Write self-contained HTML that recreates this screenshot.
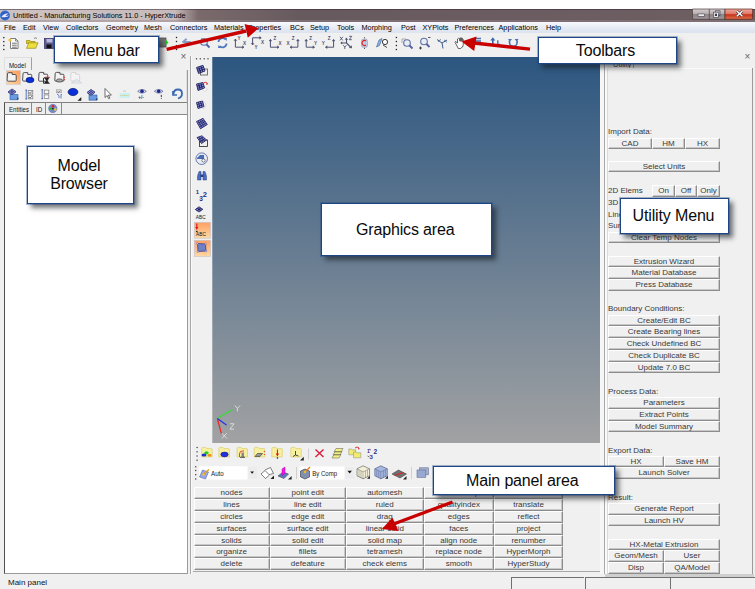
<!DOCTYPE html><html><head><meta charset="utf-8"><style>
*{margin:0;padding:0;box-sizing:border-box}
html,body{width:755px;height:589px;overflow:hidden;background:#f0f0f0;font-family:"Liberation Sans",sans-serif;color:#000}
.a{position:absolute}
.call{position:absolute;background:#fff;border:1px solid #1e4585;box-shadow:0 0 0 1px rgba(30,69,133,.35),4px 4px 5px rgba(20,25,30,.6);font-size:16px;color:#0a0a0a;text-align:center;white-space:nowrap;letter-spacing:-0.15px}
.btn{position:absolute;background:#f0f0f0;border-top:1px solid #fff;border-left:1px solid #fff;border-right:1px solid #8c8c8c;border-bottom:1px solid #8c8c8c;box-shadow:inset -1px -1px 0 #c8c8c8;font-size:8px;text-align:center;white-space:nowrap;color:#383838;line-height:10px}
.lbl{position:absolute;font-size:8px;white-space:nowrap;color:#383838;line-height:10px}
.m{position:absolute;top:2px;font-size:7.3px;white-space:nowrap;color:#000;line-height:9px}
.ic{position:absolute}
</style></head><body>
<div class="a" style="left:0;top:0;width:755px;height:9px;background:#fff"></div>
<div class="a" style="left:0;top:9px;width:755px;height:13px;background:linear-gradient(90deg,#cdc2c1 0px,#c6baba 175px,#7a6a6c 198px,#675a5e 300px,#6a5c60 500px,#6c5e61 690px)"></div>
<div class="a" style="left:0;top:9px;width:755px;height:1px;background:rgba(60,40,55,.55)"></div>
<div class="a" style="left:0;top:20px;width:755px;height:1.5px;background:rgba(150,135,140,.45)"></div>
<div class="a" style="left:13px;top:11px;font-size:7.3px;line-height:9px;color:#000;white-space:nowrap">Untitled - Manufacturing Solutions 11.0 - HyperXtrude</div>
<svg class="a" style="left:0;top:0" width="755" height="25" viewBox="0 0 755 25"><defs><linearGradient id="wb" x1="0" y1="0" x2="0" y2="1"><stop offset="0" stop-color="#d6cece"/><stop offset="0.45" stop-color="#b8aeb0"/><stop offset="0.5" stop-color="#8e8486"/><stop offset="1" stop-color="#a09698"/></linearGradient><linearGradient id="wc" x1="0" y1="0" x2="0" y2="1"><stop offset="0" stop-color="#eca89c"/><stop offset="0.45" stop-color="#e07a68"/><stop offset="0.55" stop-color="#c8341a"/><stop offset="1" stop-color="#e0704c"/></linearGradient></defs><path d="M692.5 9 h32.5 v10.3 h-31 q-1.5 0 -1.5 -1.5 z" fill="url(#wb)" stroke="#4a3e42" stroke-width="0.7"/><path d="M709.3 9 v10.3" stroke="#4a3e42" stroke-width="0.7"/><path d="M725 9 h27.6 v8.8 q0 1.5 -1.5 1.5 h-26.1 z" fill="url(#wc)" stroke="#5a2820" stroke-width="0.7"/><rect x="698" y="14" width="6.4" height="2.2" fill="#fff" stroke="#3a3a4a" stroke-width="0.6"/><rect x="715.5" y="10.8" width="4.5" height="5" fill="none" stroke="#3a3a4a" stroke-width="0.6"/><rect x="713.6" y="12.2" width="4.6" height="5" fill="#fff" stroke="#3a3a4a" stroke-width="0.6"/><rect x="714.8" y="13.6" width="2.2" height="2.4" fill="#3a3a4a"/><path d="M736.8 11 l5.6 5.2 M742.4 11 l-5.6 5.2" stroke="#3a2a2a" stroke-width="2.6"/><path d="M736.8 11 l5.6 5.2 M742.4 11 l-5.6 5.2" stroke="#fff" stroke-width="1.5"/><circle cx="5" cy="15.5" r="5" fill="#2a7ad8"/><circle cx="5" cy="15.5" r="4" fill="#3a5ac0"/><path d="M1.5 17 q2 -4 7 -3.5 q-2 1 -3 2.5 q3 0 4 -1 q-2 3 -8 2 z" fill="#e8ecff"/></svg>
<div class="a" style="left:0;top:22px;width:755px;height:11px;background:linear-gradient(#f7f9fd,#e4e9f3 60%,#dce3ef)"></div>
<span class="m" style="left:4px;top:23px">File</span>
<span class="m" style="left:23px;top:23px">Edit</span>
<span class="m" style="left:43px;top:23px">View</span>
<span class="m" style="left:66px;top:23px">Collectors</span>
<span class="m" style="left:106px;top:23px">Geometry</span>
<span class="m" style="left:144px;top:23px">Mesh</span>
<span class="m" style="left:170px;top:23px">Connectors</span>
<span class="m" style="left:214px;top:23px">Materials</span>
<span class="m" style="left:248px;top:23px">Properties</span>
<span class="m" style="left:290px;top:23px">BCs</span>
<span class="m" style="left:310px;top:23px">Setup</span>
<span class="m" style="left:337px;top:23px">Tools</span>
<span class="m" style="left:361.5px;top:23px">Morphing</span>
<span class="m" style="left:401px;top:23px">Post</span>
<span class="m" style="left:422.5px;top:23px">XYPlots</span>
<span class="m" style="left:454.5px;top:23px">Preferences</span>
<span class="m" style="left:498.5px;top:23px">Applications</span>
<span class="m" style="left:546px;top:23px">Help</span>
<div class="a" style="left:0;top:33px;width:755px;height:24px;background:#f0f0f0"></div>
<div class="a" style="left:190px;top:56px;width:1px;height:518px;background:#a8a8a8"></div>
<div class="a" style="left:191px;top:56px;width:1px;height:518px;background:#fafafa"></div>
<div class="a" style="left:180.5px;top:52px;font-size:10px;color:#666;line-height:10px">&#215;</div>
<div class="a" style="left:4px;top:57px;width:28px;height:13px;border-left:1px solid #e0e0e0;border-top:1px solid #e0e0e0;border-right:1px solid #a0a0a0;background:#f0f0f0"></div>
<div class="lbl" style="left:8.8px;top:60.5px;font-size:7.5px;color:#111;transform:scaleX(0.82);transform-origin:0 0">Model</div>
<div class="a" style="left:186px;top:69.5px;width:1px;height:504px;background:#e0e0e0"></div>
<div class="a" style="left:187px;top:69.5px;width:1px;height:504px;background:#9a9a9a"></div>
<div class="a" style="left:4px;top:102px;width:183px;height:13px;background:#eeeeee;border-top:1px solid #808080;border-bottom:1px solid #8a8a8a;border-left:1px solid #505050"></div>
<div class="lbl" style="left:8.6px;top:105px;font-size:7.8px;color:#111;transform:scaleX(0.78);transform-origin:0 0">Entities</div>
<div class="a" style="left:31px;top:103px;width:1px;height:11px;background:#8a8a8a"></div>
<div class="lbl" style="left:35.5px;top:105px;font-size:7.8px;color:#111;transform:scaleX(0.8);transform-origin:0 0">ID</div>
<div class="a" style="left:44.5px;top:103px;width:1px;height:11px;background:#8a8a8a"></div>
<div class="a" style="left:61px;top:103px;width:1px;height:11px;background:#8a8a8a"></div>
<div class="a" style="left:4px;top:115px;width:183px;height:458.5px;background:#fff;border-left:1px solid #505050;border-bottom:1px solid #9a9a9a"></div>
<div class="a" style="left:212px;top:57px;width:388px;height:386px;background:linear-gradient(#2c5680,#a1a2a3)"></div>
<div class="a" style="left:212px;top:57px;width:1px;height:386px;background:rgba(255,255,255,.25)"></div>
<div class="a" style="left:600px;top:57px;width:4px;height:517px;background:#f6f6f6"></div>
<div class="a" style="left:604px;top:56px;width:1px;height:518px;background:#a8a8a8"></div>
<div class="a" style="left:605px;top:56px;width:2px;height:518px;background:#fafafa"></div>
<div class="a" style="left:744.5px;top:52px;font-size:10px;color:#666;line-height:10px">&#215;</div>
<div class="lbl" style="left:613px;top:60px;font-size:7.5px">Utility</div>
<div class="a" style="left:633px;top:60px;width:1px;height:8px;background:#a0a0a0"></div>
<div class="a" style="left:607px;top:69px;width:1px;height:505px;background:#dadada"></div>
<div class="a" style="left:607px;top:68px;width:145px;height:1px;background:#fafafa"></div>
<div class="a" style="left:752px;top:68px;width:1px;height:506px;background:#9a9a9a"></div>
<div class="a" style="left:605px;top:574px;width:149px;height:3px;background:#cfcfcf"></div>
<div class="a" style="left:600px;top:577px;width:155px;height:1px;background:#6a6a6a"></div>
<div class="lbl" style="left:608px;top:127px">Import Data:</div>
<div class="btn" style="left:608px;top:138px;width:44px;height:11px;line-height:9px">CAD</div>
<div class="btn" style="left:652px;top:138px;width:33px;height:11px;line-height:9px">HM</div>
<div class="btn" style="left:685px;top:138px;width:35px;height:11px;line-height:9px">HX</div>
<div class="btn" style="left:608px;top:161px;width:112px;height:11px;line-height:9px">Select Units</div>
<div class="lbl" style="left:608px;top:186px">2D Elems</div>
<div class="btn" style="left:652px;top:185px;width:23px;height:12px;line-height:10px">On</div>
<div class="btn" style="left:675px;top:185px;width:22px;height:12px;line-height:10px">Off</div>
<div class="btn" style="left:697px;top:185px;width:23px;height:12px;line-height:10px">Only</div>
<div class="lbl" style="left:608px;top:198px">3D Elems</div>
<div class="lbl" style="left:608px;top:210px">Line</div>
<div class="lbl" style="left:608px;top:221px">Surf</div>
<div class="btn" style="left:608px;top:232px;width:112px;height:11px;line-height:9px">Clear Temp Nodes</div>
<div class="btn" style="left:608px;top:256px;width:112px;height:11px;line-height:9px">Extrusion Wizard</div>
<div class="btn" style="left:608px;top:267px;width:112px;height:12px;line-height:10px">Material Database</div>
<div class="btn" style="left:608px;top:279px;width:112px;height:12px;line-height:10px">Press Database</div>
<div class="lbl" style="left:608px;top:304px">Boundary Conditions:</div>
<div class="btn" style="left:608px;top:315px;width:112px;height:11px;line-height:9px">Create/Edit BC</div>
<div class="btn" style="left:608px;top:326px;width:112px;height:12px;line-height:10px">Create Bearing lines</div>
<div class="btn" style="left:608px;top:338px;width:112px;height:12px;line-height:10px">Check Undefined BC</div>
<div class="btn" style="left:608px;top:350px;width:112px;height:12px;line-height:10px">Check Duplicate BC</div>
<div class="btn" style="left:608px;top:362px;width:112px;height:11px;line-height:9px">Update 7.0 BC</div>
<div class="lbl" style="left:608px;top:387px">Process Data:</div>
<div class="btn" style="left:608px;top:397px;width:112px;height:12px;line-height:10px">Parameters</div>
<div class="btn" style="left:608px;top:409px;width:112px;height:12px;line-height:10px">Extract Points</div>
<div class="btn" style="left:608px;top:421px;width:112px;height:11px;line-height:9px">Model Summary</div>
<div class="lbl" style="left:608px;top:446px">Export Data:</div>
<div class="btn" style="left:608px;top:456px;width:56px;height:11px;line-height:9px">HX</div>
<div class="btn" style="left:664px;top:456px;width:56px;height:11px;line-height:9px">Save HM</div>
<div class="btn" style="left:608px;top:467px;width:112px;height:12px;line-height:10px">Launch Solver</div>
<div class="lbl" style="left:608px;top:493px">Result:</div>
<div class="btn" style="left:608px;top:503px;width:112px;height:12px;line-height:10px">Generate Report</div>
<div class="btn" style="left:608px;top:515px;width:112px;height:11px;line-height:9px">Launch HV</div>
<div class="btn" style="left:608px;top:539px;width:112px;height:11px;line-height:9px">HX-Metal Extrusion</div>
<div class="btn" style="left:608px;top:550px;width:56px;height:12px;line-height:10px">Geom/Mesh</div>
<div class="btn" style="left:664px;top:550px;width:56px;height:12px;line-height:10px">User</div>
<div class="btn" style="left:608px;top:562px;width:56px;height:12px;line-height:10px">Disp</div>
<div class="btn" style="left:664px;top:562px;width:56px;height:12px;line-height:10px">QA/Model</div>
<div class="btn" style="left:193.5px;top:487px;width:76.0px;height:12px;line-height:10px">nodes</div>
<div class="btn" style="left:269.5px;top:487px;width:76.5px;height:12px;line-height:10px">point edit</div>
<div class="btn" style="left:346px;top:487px;width:77.5px;height:12px;line-height:10px">automesh</div>
<div class="btn" style="left:423.5px;top:487px;width:70.5px;height:12px;line-height:10px">shrink wrap</div>
<div class="btn" style="left:494px;top:487px;width:69px;height:12px;line-height:10px">translate</div>
<div class="btn" style="left:193.5px;top:499px;width:76.0px;height:12px;line-height:10px">lines</div>
<div class="btn" style="left:269.5px;top:499px;width:76.5px;height:12px;line-height:10px">line edit</div>
<div class="btn" style="left:346px;top:499px;width:77.5px;height:12px;line-height:10px">ruled</div>
<div class="btn" style="left:423.5px;top:499px;width:70.5px;height:12px;line-height:10px">qualityindex</div>
<div class="btn" style="left:494px;top:499px;width:69px;height:12px;line-height:10px">translate</div>
<div class="btn" style="left:193.5px;top:511px;width:76.0px;height:12px;line-height:10px">circles</div>
<div class="btn" style="left:269.5px;top:511px;width:76.5px;height:12px;line-height:10px">edge edit</div>
<div class="btn" style="left:346px;top:511px;width:77.5px;height:12px;line-height:10px">drag</div>
<div class="btn" style="left:423.5px;top:511px;width:70.5px;height:12px;line-height:10px">edges</div>
<div class="btn" style="left:494px;top:511px;width:69px;height:12px;line-height:10px">reflect</div>
<div class="btn" style="left:193.5px;top:523px;width:76.0px;height:12px;line-height:10px">surfaces</div>
<div class="btn" style="left:269.5px;top:523px;width:76.5px;height:12px;line-height:10px">surface edit</div>
<div class="btn" style="left:346px;top:523px;width:77.5px;height:12px;line-height:10px">linear solid</div>
<div class="btn" style="left:423.5px;top:523px;width:70.5px;height:12px;line-height:10px">faces</div>
<div class="btn" style="left:494px;top:523px;width:69px;height:12px;line-height:10px">project</div>
<div class="btn" style="left:193.5px;top:535px;width:76.0px;height:11px;line-height:9px">solids</div>
<div class="btn" style="left:269.5px;top:535px;width:76.5px;height:11px;line-height:9px">solid edit</div>
<div class="btn" style="left:346px;top:535px;width:77.5px;height:11px;line-height:9px">solid map</div>
<div class="btn" style="left:423.5px;top:535px;width:70.5px;height:11px;line-height:9px">align node</div>
<div class="btn" style="left:494px;top:535px;width:69px;height:11px;line-height:9px">renumber</div>
<div class="btn" style="left:193.5px;top:546px;width:76.0px;height:12px;line-height:10px">organize</div>
<div class="btn" style="left:269.5px;top:546px;width:76.5px;height:12px;line-height:10px">fillets</div>
<div class="btn" style="left:346px;top:546px;width:77.5px;height:12px;line-height:10px">tetramesh</div>
<div class="btn" style="left:423.5px;top:546px;width:70.5px;height:12px;line-height:10px">replace node</div>
<div class="btn" style="left:494px;top:546px;width:69px;height:12px;line-height:10px">HyperMorph</div>
<div class="btn" style="left:193.5px;top:558px;width:76.0px;height:12px;line-height:10px">delete</div>
<div class="btn" style="left:269.5px;top:558px;width:76.5px;height:12px;line-height:10px">defeature</div>
<div class="btn" style="left:346px;top:558px;width:77.5px;height:12px;line-height:10px">check elems</div>
<div class="btn" style="left:423.5px;top:558px;width:70.5px;height:12px;line-height:10px">smooth</div>
<div class="btn" style="left:494px;top:558px;width:69px;height:12px;line-height:10px">HyperStudy</div>
<div class="a" style="left:193px;top:570.5px;width:407px;height:1.2px;background:#a8a8a8"></div>
<div class="lbl" style="left:8px;top:578px;color:#111">Main panel</div>
<div class="a" style="left:511px;top:577px;width:73px;height:14px;border-left:1.3px solid #707070;border-top:1.3px solid #707070"></div>
<div class="a" style="left:585px;top:577px;width:84px;height:14px;border-left:1.3px solid #707070;border-top:1.3px solid #707070"></div>
<div class="a" style="left:670px;top:577px;width:86px;height:14px;border-left:1.3px solid #707070;border-top:1.3px solid #707070"></div>
<svg class="a" style="left:0;top:0" width="755" height="589" viewBox="0 0 755 589"><rect x="3.15" y="36.95" width="1.3" height="1.3" fill="#222"/><rect x="3.15" y="40.95" width="1.3" height="1.3" fill="#222"/><rect x="3.15" y="44.85" width="1.3" height="1.3" fill="#222"/><rect x="3.15" y="48.85" width="1.3" height="1.3" fill="#222"/><path d="M10.5 38.5 h5 l2.5 2.5 v7.5 h-7.5 z" fill="#fff" stroke="#707070" stroke-width="0.9"/><path d="M15.5 38.5 v2.5 h2.5" fill="none" stroke="#707070" stroke-width="0.8"/><path d="M12 43.2 h4.8 M12 45.2 h4.8 M12 47.2 h4.8" stroke="#333" stroke-width="0.7"/><circle cx="10" cy="40" r="1.6" fill="#f5c030"/><path d="M26.5 40.5 h3.5 l1 1 h4 v2 h-8.5 z" fill="#d8c820" stroke="#9a8a10" stroke-width="0.7"/><path d="M26.5 48.3 l2.3 -5.5 h9.2 l-2.3 5.5 z" fill="#ece040" stroke="#9a8a10" stroke-width="0.7"/><path d="M34 38.5 q1.5 -1.5 3 0" fill="none" stroke="#555" stroke-width="0.7"/><rect x="44.5" y="38.5" width="10" height="10" fill="#5a5a90" stroke="#303060" stroke-width="0.7"/><rect x="46.5" y="39" width="6" height="3.5" fill="#b8b8e0"/><rect x="46.5" y="44.5" width="5" height="3.8" fill="#111"/><rect x="158" y="38" width="8" height="9" fill="#7a7a7a" stroke="#444" stroke-width="0.7"/><path d="M165.5 39.5 l3 3 l-3 3 z" fill="#20d020"/><rect x="175.85" y="36.85" width="1.3" height="1.3" fill="#222"/><rect x="175.85" y="40.85" width="1.3" height="1.3" fill="#222"/><rect x="175.85" y="44.95" width="1.3" height="1.3" fill="#222"/><rect x="175.85" y="48.85" width="1.3" height="1.3" fill="#222"/><path d="M182 42 l4 -3.5 l1 1 l-2.5 2 h6 v1.5 h-6 z" fill="#8aa0d0" stroke="#6080b8" stroke-width="0.5"/><circle cx="204" cy="42" r="3.3" fill="#e8eef8" stroke="#6070a0" stroke-width="1.1"/><path d="M206.5 44.5 l3 3" stroke="#5060a0" stroke-width="1.8"/><path d="M201 38.5 h4" stroke="#8890b0" stroke-width="0.8"/><path d="M218.5 42 a4 4 0 0 1 7 -2.5" fill="none" stroke="#4a78c0" stroke-width="1.8"/><path d="M226.5 43.5 a4 4 0 0 1 -7 2.5" fill="none" stroke="#4a78c0" stroke-width="1.8"/><path d="M224 38 l3 0 l-0.5 3 z M221 48 l-3 0 l0.5 -3 z" fill="#4a78c0"/><path d="M235.4 39 V47.2 H244" fill="none" stroke="#4d5170" stroke-width="1"/><path d="M234.0 40.6 L235.4 39 L236.8 40.6 z" fill="#4d5170" stroke="#4d5170" stroke-width="0.4"/><path d="M242.4 45.800000000000004 L244 47.2 L242.4 48.6 z" fill="#4d5170" stroke="#4d5170" stroke-width="0.4"/><text x="237.6" y="40" font-size="4.6" font-weight="bold" fill="#4d5170" font-family="Liberation Sans">Y</text><text x="243" y="44.6" font-size="4.6" font-weight="bold" fill="#4d5170" font-family="Liberation Sans">X</text><path d="M252.6 45 V37.8 H261.2" fill="none" stroke="#4d5170" stroke-width="1"/><path d="M251.2 43.4 L252.6 45 L254 43.4 z M259.6 36.4 L261.2 37.8 L259.6 39.2 z" fill="#4d5170" stroke="#4d5170" stroke-width="0.4"/><text x="261" y="44" font-size="4.6" font-weight="bold" fill="#4d5170" font-family="Liberation Sans">X</text><text x="254.6" y="48.8" font-size="4.6" font-weight="bold" fill="#4d5170" font-family="Liberation Sans">Y</text><path d="M270.4 39.4 V47.2 H279" fill="none" stroke="#4d5170" stroke-width="1"/><path d="M269.0 41.0 L270.4 39.4 L271.79999999999995 41.0 z" fill="#4d5170" stroke="#4d5170" stroke-width="0.4"/><path d="M277.4 45.800000000000004 L279 47.2 L277.4 48.6 z" fill="#4d5170" stroke="#4d5170" stroke-width="0.4"/><text x="273.6" y="39.6" font-size="4.6" font-weight="bold" fill="#4d5170" font-family="Liberation Sans">Z</text><text x="278.5" y="44.6" font-size="4.6" font-weight="bold" fill="#4d5170" font-family="Liberation Sans">X</text><path d="M297.9 39.4 V47.2 H290" fill="none" stroke="#4d5170" stroke-width="1"/><path d="M296.5 41.0 L297.9 39.4 L299.29999999999995 41.0 z" fill="#4d5170" stroke="#4d5170" stroke-width="0.4"/><path d="M291.6 45.800000000000004 L290 47.2 L291.6 48.6 z" fill="#4d5170" stroke="#4d5170" stroke-width="0.4"/><text x="291.8" y="39.6" font-size="4.6" font-weight="bold" fill="#4d5170" font-family="Liberation Sans">Z</text><text x="286.4" y="44.6" font-size="4.6" font-weight="bold" fill="#4d5170" font-family="Liberation Sans">X</text><path d="M306.2 39.4 V47.2 H314.5" fill="none" stroke="#4d5170" stroke-width="1"/><path d="M304.8 41.0 L306.2 39.4 L307.59999999999997 41.0 z" fill="#4d5170" stroke="#4d5170" stroke-width="0.4"/><path d="M312.9 45.800000000000004 L314.5 47.2 L312.9 48.6 z" fill="#4d5170" stroke="#4d5170" stroke-width="0.4"/><text x="309.3" y="39.6" font-size="4.6" font-weight="bold" fill="#4d5170" font-family="Liberation Sans">Z</text><text x="314" y="44.6" font-size="4.6" font-weight="bold" fill="#4d5170" font-family="Liberation Sans">Y</text><path d="M333.6 39.4 V47.2 H325.5" fill="none" stroke="#4d5170" stroke-width="1"/><path d="M332.20000000000005 41.0 L333.6 39.4 L335.0 41.0 z" fill="#4d5170" stroke="#4d5170" stroke-width="0.4"/><path d="M327.1 45.800000000000004 L325.5 47.2 L327.1 48.6 z" fill="#4d5170" stroke="#4d5170" stroke-width="0.4"/><text x="327.8" y="39.6" font-size="4.6" font-weight="bold" fill="#4d5170" font-family="Liberation Sans">Z</text><text x="321.8" y="44.6" font-size="4.6" font-weight="bold" fill="#4d5170" font-family="Liberation Sans">Y</text><path d="M346.5 43 V38.8 M346.5 43 H341.5 M346.5 43 L350.5 47" fill="none" stroke="#4d5170" stroke-width="1.1"/><path d="M344.8 39.6 L346.7 37.6 L347.9 40 z M342.2 41.3 L340.3 43 L342.2 44.6 z M351.8 45.2 L351.9 48.2 L348.9 47.9 z" fill="#4d5170"/><path d="M340 36.8 l2.8 3.6 M342.8 36.8 l-2.8 3.6 M349.2 36.3 h2.6 l-2.6 3.4 h2.6 M343.2 45.2 l1.6 1.8 l1.6 -1.8 M344.8 47 v2" fill="none" stroke="#4d5170" stroke-width="0.9"/><rect x="361.5" y="39" width="6" height="8.5" rx="2" fill="#c0c8e0" stroke="#8890b0" stroke-width="0.5"/><path d="M366 41 a2.5 2.5 0 1 0 0 4" fill="none" stroke="#e02020" stroke-width="1.1"/><circle cx="364.5" cy="37.8" r="0.5" fill="#222"/><circle cx="364.5" cy="48.6" r="0.5" fill="#222"/><path d="M376.5 47 l2.5 -7 l3 -1.5 l-2.5 7 z" fill="#8ab0e8" stroke="#406090" stroke-width="0.6"/><circle cx="385" cy="42" r="2.6" fill="#fff" stroke="#222" stroke-width="0.9"/><path d="M383 45 l4 2.5" stroke="#222" stroke-width="0.8"/><rect x="395.75" y="36.85" width="1.3" height="1.3" fill="#222"/><rect x="395.75" y="40.85" width="1.3" height="1.3" fill="#222"/><rect x="395.75" y="44.85" width="1.3" height="1.3" fill="#222"/><rect x="395.75" y="48.85" width="1.3" height="1.3" fill="#222"/><path d="M402 39 h4 M402 39 v4" stroke="#999" stroke-width="0.8"/><circle cx="407" cy="43" r="3.3" fill="#e8eef8" stroke="#6070a0" stroke-width="1.1"/><path d="M409.5 45.5 l3 3" stroke="#5060a0" stroke-width="1.8"/><circle cx="424" cy="41.5" r="3.3" fill="#e8eef8" stroke="#6070a0" stroke-width="1.1"/><path d="M426.5 44 l3 3" stroke="#5060a0" stroke-width="1.8"/><path d="M428 37.5 h2.5" stroke="#333" stroke-width="0.8"/><path d="M419 48 h3 M420.5 46.5 v3" stroke="#222" stroke-width="0.8"/><path d="M442 43 L437 39.5 M442 43 L447 40 M442 43 L443 48.5" fill="none" stroke="#3a5a8a" stroke-width="1"/><path d="M438 42 q1 -2 3 -2.5 M444 40 q2 0.5 2.5 2.5" fill="none" stroke="#3a5a8a" stroke-width="0.7"/><path d="M456 44 q-1.5 -1.5 -0.5 -2.5 l2 1.5 v-4 q1 -1.5 2 0 v0 q1 -1 2 0 q1 -0.5 1.8 0.5 v5 q0 3 -3 4 h-2 z" fill="#fff" stroke="#222" stroke-width="0.7"/><rect x="459" y="37.5" width="4" height="4" fill="#606060" rx="1.5"/><path d="M475 38.5 h6 M475 41 h6" stroke="#4a70b0" stroke-width="1.3"/><path d="M492.8 45 V39" fill="none" stroke="#3a68b0" stroke-width="1.6"/><path d="M490.3 40.5 L492.8 37.2 L495.3 40.5 z" fill="#3a68b0"/><path d="M497.8 40.2 V44.5 H500" fill="none" stroke="#3a68b0" stroke-width="1.3"/><path d="M509.5 40.5 v2 a3.8 3.8 0 0 0 7.6 0 v-2" fill="none" stroke="#4a70b0" stroke-width="1.6"/><path d="M508 39 h4 l-2 2.5 z M518.6 39 h-4 l2 2.5 z" fill="#4a70b0"/><defs><linearGradient id="og" x1="0" y1="1" x2="1" y2="0"><stop offset="0" stop-color="#ffd8a8"/><stop offset="1" stop-color="#ff9a58"/></linearGradient><linearGradient id="og2" x1="0" y1="0" x2="0" y2="1"><stop offset="0" stop-color="#ff9f62"/><stop offset="1" stop-color="#ffd9a4"/></linearGradient><pattern id="grid" width="2" height="2" patternUnits="userSpaceOnUse"><rect width="2" height="2" fill="#2a2a70"/><rect x="0.4" y="0.4" width="1.1" height="1.1" fill="#6a70c8"/></pattern></defs><rect x="6.3" y="70.6" width="14.2" height="14.0" fill="url(#og)" stroke="#c8ccd8" stroke-width="0.6"/><path d="M7.5 73.9 q0 -1.2 1.2 -1.2 h3.51 v1.8 h3.09 q0.9 0 0.9 1 v4.7 q0 1 -1 1 h-7.0 q-1.1 0 -1.1 -1.1 z" fill="#f2f2f2" stroke="#404040" stroke-width="0.9"/><path d="M23 73.8 q0 -1.2 1.2 -1.2 h3.51 v1.8 h3.09 q0.9 0 0.9 1 v4.7 q0 1 -1 1 h-7.0 q-1.1 0 -1.1 -1.1 z" fill="#f2f2f2" stroke="#404040" stroke-width="0.9"/><ellipse cx="30" cy="80" rx="4" ry="2.7" fill="#0a30d8" stroke="#001070" stroke-width="0.6"/><path d="M39 73.60000000000001 q0 -1.2 1.2 -1.2 h3.51 v1.8 h3.09 q0.9 0 0.9 1 v5.0 q0 1 -1 1 h-7.0 q-1.1 0 -1.1 -1.1 z" fill="#f2f2f2" stroke="#404040" stroke-width="0.9"/><path d="M44 77.5 h5.5 l-2.5 3 l2.5 3 h-5.5 l2.5 -3 z" fill="#222" stroke="#222" stroke-width="0.5"/><path d="M43.5 78 v5.5" stroke="#8a1010" stroke-width="1"/><path d="M45 77 h4.5" stroke="#ff5050" stroke-width="0.7"/><path d="M55.2 73.60000000000001 q0 -1.2 1.2 -1.2 h3.51 v1.8 h3.09 q0.9 0 0.9 1 v5.0 q0 1 -1 1 h-7.0 q-1.1 0 -1.1 -1.1 z" fill="#f2f2f2" stroke="#404040" stroke-width="0.9"/><ellipse cx="59.5" cy="80.5" rx="3.2" ry="1.6" fill="#aaa" stroke="#333" stroke-width="0.7"/><path d="M64.5 76.5 l-0.8 1.2 h1.6 z M64.5 80.5 l-0.8 -1.2 h1.6 z" fill="#e02020"/><path d="M71 73.7 q0 -1.2 1.2 -1.2 h3.51 v1.8 h3.09 q0.9 0 0.9 1 v4.7 q0 1 -1 1 h-7.0 q-1.1 0 -1.1 -1.1 z" fill="#f4f4f4" stroke="#d4d4d4" stroke-width="0.9"/><path d="M71.5 83 l5 -4 l5 4 z" fill="none" stroke="#c8cce0" stroke-width="0.8"/><path d="M10.0 93.5 h3 l1 1 h4 v5.2 h-8 z" fill="#6a9ae0" stroke="#2858a8" stroke-width="0.6"/><path d="M8.0 92.0 L12.0 89.0 L16.0 91.7 L12.0 94.8 z" fill="#20205a" stroke="#20205a" stroke-width="0.8"/><circle cx="9.33" cy="91.96" r="0.75" fill="#8a90e0"/><circle cx="10.67" cy="92.89" r="0.75" fill="#8a90e0"/><circle cx="12.00" cy="93.82" r="0.75" fill="#8a90e0"/><circle cx="10.67" cy="90.96" r="0.75" fill="#8a90e0"/><circle cx="12.00" cy="91.88" r="0.75" fill="#8a90e0"/><circle cx="13.33" cy="92.79" r="0.75" fill="#8a90e0"/><circle cx="12.00" cy="89.95" r="0.75" fill="#8a90e0"/><circle cx="13.33" cy="90.86" r="0.75" fill="#8a90e0"/><circle cx="14.67" cy="91.76" r="0.75" fill="#8a90e0"/><path d="M16.7 99.2 l1.6 -1.6 v1.6 z" fill="#111"/><path d="M26.2 89.8 v9.5 M25.4 90.1 h1.6 M25.4 99.0 h1.6" stroke="#3858b8" stroke-width="0.8"/><rect x="28.2" y="90.39999999999999" width="4.6" height="3.6" fill="#f8f8f8" stroke="#777" stroke-width="0.7"/><rect x="28.2" y="95.2" width="4.6" height="3.6" fill="#f8f8f8" stroke="#777" stroke-width="0.7"/><path d="M29.0 92.3 l1 1 l2 -2 M29.0 97.1 l1 1 l2 -2" fill="none" stroke="#333" stroke-width="0.7"/><path d="M42.2 89.5 v9.5 M41.400000000000006 89.8 h1.6 M41.400000000000006 98.7 h1.6" stroke="#3858b8" stroke-width="0.8"/><rect x="44.2" y="90.1" width="4.6" height="3.6" fill="#f8f8f8" stroke="#777" stroke-width="0.7"/><rect x="44.2" y="94.9" width="4.6" height="3.6" fill="#f8f8f8" stroke="#777" stroke-width="0.7"/><rect x="56.5" y="89.8" width="5" height="3" fill="#ddd" stroke="#888" stroke-width="0.5"/><path d="M57.5 91.5 l1 0.8 l2 -1.5" stroke="#333" stroke-width="0.5" fill="none"/><path d="M57 94 l2 1.5 v2.5 M62 94.5 h-1 v4" fill="none" stroke="#3868c0" stroke-width="0.8"/><ellipse cx="73" cy="92" rx="4.9" ry="3.6" fill="#0a30d8" stroke="#001070" stroke-width="0.7"/><path d="M77.5 100.8 l3.8 -3.8 v3.8 z" fill="#222"/><path d="M89.0 94 h3 l1 1 h4 v5.2 h-8 z" fill="#6a9ae0" stroke="#2858a8" stroke-width="0.6"/><path d="M87.0 92.5 L91.0 89.5 L95.0 92.2 L91.0 95.3 z" fill="#20205a" stroke="#20205a" stroke-width="0.8"/><circle cx="88.33" cy="92.46" r="0.75" fill="#8a90e0"/><circle cx="89.67" cy="93.39" r="0.75" fill="#8a90e0"/><circle cx="91.00" cy="94.32" r="0.75" fill="#8a90e0"/><circle cx="89.67" cy="91.46" r="0.75" fill="#8a90e0"/><circle cx="91.00" cy="92.38" r="0.75" fill="#8a90e0"/><circle cx="92.33" cy="93.29" r="0.75" fill="#8a90e0"/><circle cx="91.00" cy="90.45" r="0.75" fill="#8a90e0"/><circle cx="92.33" cy="91.36" r="0.75" fill="#8a90e0"/><circle cx="93.67" cy="92.26" r="0.75" fill="#8a90e0"/><path d="M95.7 99.7 l1.6 -1.6 v1.6 z" fill="#111"/><path d="M105 88.5 v9 l2.2 -2 l1.5 3.2 l1.2 -0.6 l-1.5 -3 h3 z" fill="#fff" stroke="#333" stroke-width="0.7"/><rect x="119.5" y="93" width="10.5" height="4.8" fill="#c8f0f0"/><path d="M120.5 95.5 h8.5" stroke="#d8c870" stroke-width="1" stroke-dasharray="0.7 0.5"/><path d="M123 91.5 q1.5 -1.5 3 0" fill="none" stroke="#aaa" stroke-width="0.6"/><path d="M137.7 91.3 q4.3 -3.6 8.6 0 q-4.3 3.6 -8.6 0 z" fill="#e8ecf8" stroke="#303870" stroke-width="0.6"/><circle cx="142" cy="91.3" r="1.8" fill="#1a2890"/><text x="138.3" y="98.8" font-size="4.5" font-weight="bold" fill="#303070" font-family="Liberation Sans">+/-</text><path d="M154.39999999999998 91.3 q4.3 -3.6 8.6 0 q-4.3 3.6 -8.6 0 z" fill="#e8ecf8" stroke="#303870" stroke-width="0.6"/><circle cx="158.7" cy="91.3" r="1.8" fill="#1a2890"/><path d="M161.3 94.8 v2.2" stroke="#202050" stroke-width="0.9"/><circle cx="161.3" cy="98.3" r="0.5" fill="#202050"/><path d="M173 91 v4 h4" fill="none" stroke="#3a68b0" stroke-width="1.7"/><path d="M173.5 94.5 q0 -5 4.5 -5 q4 0 4 4 q0 4 -4 5" fill="none" stroke="#3a68b0" stroke-width="1.8"/><rect x="195.9" y="58.2" width="1.2" height="1.2" fill="#333"/><rect x="199.70000000000002" y="58.2" width="1.2" height="1.2" fill="#333"/><rect x="203.6" y="58.2" width="1.2" height="1.2" fill="#333"/><rect x="207.4" y="58.2" width="1.2" height="1.2" fill="#333"/><rect x="200.5" y="69" width="7" height="6" fill="#eee" stroke="#555" stroke-width="0.8"/><path d="M196.5 67.5 L203 65.3 L205 71 L198.5 73.5 z" fill="#20205a" stroke="#20205a" stroke-width="0.8"/><circle cx="197.92" cy="68.12" r="0.75" fill="#8a90e0"/><circle cx="198.58" cy="70.11" r="0.75" fill="#8a90e0"/><circle cx="199.25" cy="72.09" r="0.75" fill="#8a90e0"/><circle cx="200.08" cy="67.38" r="0.75" fill="#8a90e0"/><circle cx="200.75" cy="69.33" r="0.75" fill="#8a90e0"/><circle cx="201.42" cy="71.28" r="0.75" fill="#8a90e0"/><circle cx="202.25" cy="66.62" r="0.75" fill="#8a90e0"/><circle cx="202.92" cy="68.54" r="0.75" fill="#8a90e0"/><circle cx="203.58" cy="70.46" r="0.75" fill="#8a90e0"/><path d="M201 88 l2.5 -1.5 l4 3 l-2.5 2 z" fill="#fafafa" stroke="#bbb" stroke-width="0.5"/><path d="M196.5 84 L203 82.5 L204.5 88 L198 90.5 z" fill="#20205a" stroke="#20205a" stroke-width="0.8"/><circle cx="197.83" cy="84.81" r="0.75" fill="#8a90e0"/><circle cx="198.33" cy="86.92" r="0.75" fill="#8a90e0"/><circle cx="198.83" cy="89.03" r="0.75" fill="#8a90e0"/><circle cx="200.00" cy="84.25" r="0.75" fill="#8a90e0"/><circle cx="200.50" cy="86.25" r="0.75" fill="#8a90e0"/><circle cx="201.00" cy="88.25" r="0.75" fill="#8a90e0"/><circle cx="202.17" cy="83.69" r="0.75" fill="#8a90e0"/><circle cx="202.67" cy="85.58" r="0.75" fill="#8a90e0"/><circle cx="203.17" cy="87.47" r="0.75" fill="#8a90e0"/><path d="M203.5 83 q2.5 -2 4 0.5" fill="none" stroke="#e02020" stroke-width="0.9"/><path d="M206.5 82.8 l1.8 1.2 l-1.8 1 z" fill="#e02020"/><path d="M201 106 l2.5 -4.5 l2.5 2.5 l-2.5 5 z" fill="#fafafa" stroke="#bbb" stroke-width="0.5"/><path d="M196.5 102.5 L202.5 101 L204 106.5 L198 108.5 z" fill="#20205a" stroke="#20205a" stroke-width="0.8"/><circle cx="197.75" cy="103.24" r="0.75" fill="#8a90e0"/><circle cx="198.25" cy="105.21" r="0.75" fill="#8a90e0"/><circle cx="198.75" cy="107.18" r="0.75" fill="#8a90e0"/><circle cx="199.75" cy="102.71" r="0.75" fill="#8a90e0"/><circle cx="200.25" cy="104.62" r="0.75" fill="#8a90e0"/><circle cx="200.75" cy="106.54" r="0.75" fill="#8a90e0"/><circle cx="201.75" cy="102.18" r="0.75" fill="#8a90e0"/><circle cx="202.25" cy="104.04" r="0.75" fill="#8a90e0"/><circle cx="202.75" cy="105.90" r="0.75" fill="#8a90e0"/><path d="M196.5 121.5 L203 118.3 L207.3 124.5 L200.5 128.8 z" fill="#20205a" stroke="#20205a" stroke-width="0.8"/><circle cx="197.82" cy="122.00" r="0.75" fill="#8a90e0"/><circle cx="198.83" cy="123.79" r="0.75" fill="#8a90e0"/><circle cx="199.84" cy="125.58" r="0.75" fill="#8a90e0"/><circle cx="200.85" cy="127.37" r="0.75" fill="#8a90e0"/><circle cx="199.45" cy="121.16" r="0.75" fill="#8a90e0"/><circle cx="200.48" cy="122.88" r="0.75" fill="#8a90e0"/><circle cx="201.51" cy="124.60" r="0.75" fill="#8a90e0"/><circle cx="202.54" cy="126.33" r="0.75" fill="#8a90e0"/><circle cx="201.09" cy="120.33" r="0.75" fill="#8a90e0"/><circle cx="202.13" cy="121.98" r="0.75" fill="#8a90e0"/><circle cx="203.18" cy="123.63" r="0.75" fill="#8a90e0"/><circle cx="204.23" cy="125.29" r="0.75" fill="#8a90e0"/><circle cx="202.72" cy="119.49" r="0.75" fill="#8a90e0"/><circle cx="203.79" cy="121.08" r="0.75" fill="#8a90e0"/><circle cx="204.85" cy="122.66" r="0.75" fill="#8a90e0"/><circle cx="205.92" cy="124.25" r="0.75" fill="#8a90e0"/><rect x="199.5" y="140" width="8" height="6.5" fill="#eee" stroke="#222" stroke-width="0.8"/><path d="M197 137.5 L202 135.8 L206.5 140 L201.5 143.5 z" fill="#20205a" stroke="#20205a" stroke-width="0.8"/><circle cx="198.58" cy="138.17" r="0.75" fill="#8a90e0"/><circle cx="200.08" cy="140.07" r="0.75" fill="#8a90e0"/><circle cx="201.58" cy="141.97" r="0.75" fill="#8a90e0"/><circle cx="200.25" cy="137.50" r="0.75" fill="#8a90e0"/><circle cx="201.75" cy="139.20" r="0.75" fill="#8a90e0"/><circle cx="203.25" cy="140.90" r="0.75" fill="#8a90e0"/><circle cx="201.92" cy="136.83" r="0.75" fill="#8a90e0"/><circle cx="203.42" cy="138.33" r="0.75" fill="#8a90e0"/><circle cx="204.92" cy="139.83" r="0.75" fill="#8a90e0"/><circle cx="201.7" cy="158.7" r="5.8" fill="#e8ecf4" stroke="#4a5a98" stroke-width="0.8"/><path d="M197 158 l3 -3 h4 v4 h-7 z" fill="#4a6ab8"/><circle cx="203.5" cy="160.5" r="1.6" fill="#fff" stroke="#333" stroke-width="0.6"/><path d="M197.5 180 v-4 l1.5 -4.5 h2 v8.5 z M206.5 180 v-4 l-1.5 -4.5 h-2 v8.5 z" fill="#4a6ec0" stroke="#2a3e88" stroke-width="0.5"/><rect x="200.5" y="174.5" width="3" height="2.5" fill="#2a3e88"/><text x="195.8" y="194" font-size="6" font-weight="bold" fill="#2a2e88" font-family="Liberation Sans">1</text><text x="199.2" y="200.5" font-size="6.5" font-weight="bold" fill="#2a2e88" font-family="Liberation Sans">3</text><text x="202.8" y="197" font-size="7.5" font-weight="bold" fill="#2a2e88" font-family="Liberation Sans">2</text><path d="M195.3 209.5 L199 206.8 L202.8 209.3 L199 212 z" fill="#20205a" stroke="#20205a" stroke-width="0.8"/><circle cx="197.16" cy="209.45" r="0.75" fill="#8a90e0"/><circle cx="199.02" cy="210.70" r="0.75" fill="#8a90e0"/><circle cx="199.02" cy="208.10" r="0.75" fill="#8a90e0"/><circle cx="200.91" cy="209.35" r="0.75" fill="#8a90e0"/><text x="195.8" y="218.7" font-size="4.8" fill="#111" font-family="Liberation Sans">ABC</text><rect x="194.3" y="222.4" width="16.3" height="15.8" fill="url(#og2)" stroke="#c0c4d0" stroke-width="0.6"/><path d="M196.8 223.5 v4" stroke="#e01010" stroke-width="1.1"/><path d="M195.3 227 h3 l-1.5 3 z" fill="#e01010"/><circle cx="196.8" cy="231.5" r="0.8" fill="#111"/><text x="196" y="236.3" font-size="4.8" fill="#111" font-family="Liberation Sans">ABC</text><rect x="194.3" y="240.3" width="16.3" height="16.3" fill="url(#og2)" stroke="#c0c4d0" stroke-width="0.6"/><path d="M197.5 243.5 l8 0.5 l0.5 7 l-8 0.5 z" fill="#7080c8" stroke="#303070" stroke-width="0.7"/><circle cx="197.5" cy="243.5" r="0.9" fill="#c8d0f8" stroke="#4050a0" stroke-width="0.4"/><circle cx="205.5" cy="244" r="0.9" fill="#c8d0f8" stroke="#4050a0" stroke-width="0.4"/><circle cx="206" cy="251" r="0.9" fill="#c8d0f8" stroke="#4050a0" stroke-width="0.4"/><circle cx="198" cy="251.5" r="0.9" fill="#c8d0f8" stroke="#4050a0" stroke-width="0.4"/><path d="M217.3 418.5 L232.6 409.5" stroke="#30e030" stroke-width="1.2"/><path d="M217.3 418.5 L226.5 425.1" stroke="#2030f0" stroke-width="1.2"/><path d="M217.3 418.5 L221.5 433.9" stroke="#f02020" stroke-width="1.2"/><path d="M234.8 405.5 l2.6 2.8 l2.6 -2.8 M237.4 408.3 v3" fill="none" stroke="#e8e8e8" stroke-width="0.8"/><path d="M230 423.8 h4 l-4 5.4 h4" fill="none" stroke="#e8e8e8" stroke-width="0.8"/><path d="M221.8 433.2 l5 5.2 M226.8 433.2 l-5 5.2" fill="none" stroke="#e8e8e8" stroke-width="0.8"/><rect x="196.5" y="446.9" width="1.2" height="1.2" fill="#333"/><rect x="196.5" y="451.2" width="1.2" height="1.2" fill="#333"/><rect x="196.5" y="455.4" width="1.2" height="1.2" fill="#333"/><rect x="196.5" y="459.59999999999997" width="1.2" height="1.2" fill="#333"/><path d="M201.7 448.7 q0 -1.3 1.3 -1.3 h2.8 l1 1.2 h4.6 q0.8 0 0.8 0.8 v7.5 h-10.5 z" fill="#f6f0a0" stroke="#d8c860" stroke-width="0.6"/><ellipse cx="206.5" cy="452.7" rx="2.2" ry="1.5" fill="#20d020"/><ellipse cx="204" cy="455" rx="2.5" ry="1.5" fill="#1a30d0"/><ellipse cx="209.5" cy="455.3" rx="2.2" ry="1.4" fill="#f09010"/><path d="M218.9 448.7 q0 -1.3 1.3 -1.3 h2.8 l1 1.2 h4.6 q0.8 0 0.8 0.8 v7.5 h-10.5 z" fill="#f6f0a0" stroke="#d8c860" stroke-width="0.6"/><ellipse cx="224.5" cy="454.5" rx="3.7" ry="2.4" fill="#2030e0" stroke="#101070" stroke-width="0.5"/><path d="M237 448.7 q0 -1.3 1.3 -1.3 h2.8 l1 1.2 h4.6 q0.8 0 0.8 0.8 v7.5 h-10.5 z" fill="#f6f0a0" stroke="#d8c860" stroke-width="0.6"/><path d="M239.5 457 v-3 q0 -3 3 -3 h1.5" fill="none" stroke="#e03030" stroke-width="0.9"/><rect x="241.5" y="452.5" width="2.5" height="4.5" fill="#888"/><path d="M240 457.3 h5" stroke="#222" stroke-width="0.8"/><path d="M254.2 448.7 q0 -1.3 1.3 -1.3 h2.8 l1 1.2 h4.6 q0.8 0 0.8 0.8 v7.5 h-10.5 z" fill="#f6f0a0" stroke="#d8c860" stroke-width="0.6"/><path d="M255 456.5 l2.5 -3 h5 l-2.5 3 z" fill="#999" stroke="#333" stroke-width="0.6"/><circle cx="264.3" cy="451.5" r="0.6" fill="#e02020"/><circle cx="264.3" cy="454.5" r="0.6" fill="#e02020"/><path d="M271.8 448.7 q0 -1.3 1.3 -1.3 h2.8 l1 1.2 h4.6 q0.8 0 0.8 0.8 v7.5 h-10.5 z" fill="#f6f0a0" stroke="#d8c860" stroke-width="0.6"/><path d="M277.4 449.5 v5" stroke="#e01010" stroke-width="1"/><path d="M275.8 453.5 h3.2 l-1.6 3 z" fill="#e01010"/><circle cx="277.4" cy="458" r="0.8" fill="#111"/><path d="M290.8 448.7 q0 -1.3 1.3 -1.3 h2.8 l1 1.2 h4.6 q0.8 0 0.8 0.8 v7.5 h-10.5 z" fill="#f6f0a0" stroke="#d8c860" stroke-width="0.6"/><path d="M293 456.5 l2.5 -1.5 v-4 M295.5 455 l3 1" fill="none" stroke="#222" stroke-width="0.8"/><path d="M300 460.6 l3.8 -3.8 v3.8 z" fill="#222"/><rect x="308" y="448.6" width="0.8" height="11" fill="#c8c8c8"/><path d="M315.5 449.5 l8 7.5 M323.5 449.5 l-8 7.5" stroke="#d42040" stroke-width="1.4"/><path d="M334 452 l2 -3.5 h7 l-2 3.5 z M333 455 l2 -3.5 h7 l-2 3.5 z M332 458 l2 -3.5 h7 l-2 3.5 z" fill="#f4f080" stroke="#555" stroke-width="0.5"/><path d="M348.8 449 h3 l0.8 0.8 h3 v5 h-6.8 z" fill="#f0ec70" stroke="#888" stroke-width="0.5"/><path d="M353.5 452 h3 l0.8 0.8 h3.5 v5 h-7.3 z" fill="#f0ec70" stroke="#888" stroke-width="0.5"/><path d="M355 448 q2 -2 4 0" fill="none" stroke="#e02020" stroke-width="0.9"/><path d="M358.5 447.5 l1.5 1.5 l-2 0.5 z" fill="#e02020"/><text x="367" y="452.5" font-size="5" font-weight="bold" fill="#2a2e88" font-family="Liberation Sans">1</text><text x="369.5" y="458.8" font-size="6" font-weight="bold" fill="#2a2e88" font-family="Liberation Sans">3</text><text x="373.5" y="454" font-size="6.5" font-weight="bold" fill="#2a2e88" font-family="Liberation Sans">2</text><path d="M369 449 l2 1 M367.5 456 l2 1" stroke="#222" stroke-width="0.6"/><rect x="195.1" y="466.2" width="1.2" height="1.2" fill="#333"/><rect x="195.1" y="469.9" width="1.2" height="1.2" fill="#333"/><rect x="195.1" y="474.09999999999997" width="1.2" height="1.2" fill="#333"/><rect x="195.1" y="478.4" width="1.2" height="1.2" fill="#333"/><rect x="198.9" y="466.2" width="58.8" height="13.3" fill="#fff"/><rect x="247.6" y="466.2" width="10.1" height="13.3" fill="#ececec"/><path d="M250.3 471.5 h3.7 l-1.85 2.2 z" fill="#111"/><path d="M199.5 477 l3 -7 l6 2 l-3 7 z" fill="#9aa8e8" stroke="#4050a0" stroke-width="0.5"/><path d="M203 474.5 l6 -5" stroke="#e8a020" stroke-width="1.5"/><circle cx="203.5" cy="474.5" r="1.2" fill="#f0c020"/><text x="211" y="476" font-size="7" fill="#222" font-family="Liberation Sans" textLength="12.8" lengthAdjust="spacingAndGlyphs">Auto</text><path d="M261 474 l4.5 4.5 l4 -3.5 l-4.5 -4.5 z M265 470 l5.5 -2.5 l3 6 l-4 1" fill="#fff" stroke="#333" stroke-width="0.6"/><path d="M270.4 479 l3.6 -3.6 v3.6 z" fill="#222"/><path d="M278 476 l5 -4 l5.5 2 l-4.5 4.5 z" fill="#5a7ac0" stroke="#333" stroke-width="0.5"/><path d="M282 469 l3 -2 v6.5 l-3 2 z" fill="#ff10f0" stroke="#800080" stroke-width="0.4"/><path d="M288 479.5 l3.6 -3.6 v3.6 z" fill="#222"/><rect x="296" y="467" width="0.8" height="12" fill="#c8c8c8"/><rect x="299.5" y="466.4" width="55.3" height="13.1" fill="#fff"/><rect x="344.6" y="466.4" width="10.2" height="13.1" fill="#ececec"/><path d="M347.5 470.7 h4.4 l-2.2 2.8 z" fill="#111"/><path d="M300.5 471 l4.5 -2 l4.5 2 v6 l-4.5 2 l-4.5 -2 z" fill="#8090b0" stroke="#333" stroke-width="0.6"/><path d="M305 472 l5 -5" stroke="#e08020" stroke-width="1.5"/><circle cx="305" cy="472" r="1.2" fill="#f0c020"/><text x="312.2" y="475.8" font-size="7" fill="#222" font-family="Liberation Sans" textLength="25" lengthAdjust="spacingAndGlyphs">By Comp</text><path d="M357 468.8 l6 -3 l6.5 3 v7 l-6.5 3 l-6 -3 z" fill="#f4f0d8" stroke="#555" stroke-width="0.6"/><path d="M357 468.8 l6 3 l6.5 -3 M363 471.8 v7 M359 469.8 v7 M361 470.8 v7 M365.5 470.8 v7 M367.5 469.8 v7" fill="none" stroke="#555" stroke-width="0.4"/><path d="M367 478.8 l3 -3 v3 z" fill="#222"/><path d="M374.8 468.8 l6 -3 l6.5 3 v7 l-6.5 3 l-6 -3 z" fill="#a8b8e0" stroke="#405080" stroke-width="0.6"/><path d="M374.8 468.8 l6 3 l6.5 -3 M380.8 471.8 v7 M376.8 469.8 v7 M378.8 470.8 v7 M383.3 470.8 v7 M385.3 469.8 v7" fill="none" stroke="#405080" stroke-width="0.4"/><path d="M385 478.8 l3 -3 v3 z" fill="#222"/><path d="M392 474 l6.5 -4 l8 4 l-6.5 4 z" fill="#707070" stroke="#333" stroke-width="0.5"/><path d="M394.5 475.5 l9 -3" stroke="#e02020" stroke-width="1"/><path d="M403 479.5 l3.5 -3.5 v3.5 z" fill="#222"/><rect x="411.2" y="467" width="0.8" height="12" fill="#c8c8c8"/><rect x="419.5" y="467.8" width="8.8" height="7" fill="#a8b0c8" stroke="#6070a0" stroke-width="0.6"/><rect x="417" y="470" width="8.8" height="7.3" fill="#98a8d0" stroke="#6070a0" stroke-width="0.6"/><circle cx="52.8" cy="108.5" r="4.2" fill="#7a88c8" stroke="#5a68a8" stroke-width="0.5"/><circle cx="50.5" cy="108.8" r="1.2" fill="#20c020"/><circle cx="53" cy="106.2" r="1.2" fill="#e02020"/><circle cx="55.3" cy="109.5" r="1.2" fill="#e8d020"/><circle cx="52.8" cy="108.7" r="0.9" fill="#222"/></svg>
<div class="call" style="left:54px;top:35.5px;width:105px;height:27px;line-height:27px">Menu bar</div>
<div class="call" style="left:538px;top:37.3px;width:139px;height:26.7px;line-height:26px;text-indent:-4px">Toolbars</div>
<div class="call" style="left:27px;top:146.4px;width:107px;height:57.5px;line-height:17.8px;padding-top:10px;padding-right:3px">Model<br>Browser</div>
<div class="call" style="left:321.4px;top:203px;width:170.6px;height:53px;line-height:52px;text-indent:-3px">Graphics area</div>
<div class="call" style="left:620.4px;top:198.2px;width:108.2px;height:36px;line-height:34px;text-indent:-2px">Utility Menu</div>
<div class="call" style="left:433px;top:465.5px;width:181.5px;height:29px;line-height:27px;text-indent:-3px">Main panel area</div>
<svg class="a" style="left:0;top:0" width="755" height="589" viewBox="0 0 755 589"><path d="M166.6 49.4 L246 31" stroke="#c80000" stroke-width="3.4"/><path d="M258.7 28 L244.6 24 L247.8 37.8 z" fill="#c80000"/><path d="M530 49.1 L474 43" stroke="#c80000" stroke-width="3.4"/><path d="M461.5 41.5 L476.6 36.5 L474.2 51 z" fill="#c80000"/><path d="M452.5 502 L391 525" stroke="#c80000" stroke-width="3.2"/><path d="M381.9 529.1 L392.5 517.6 L398.4 531 z" fill="#c80000"/></svg>
</body></html>
